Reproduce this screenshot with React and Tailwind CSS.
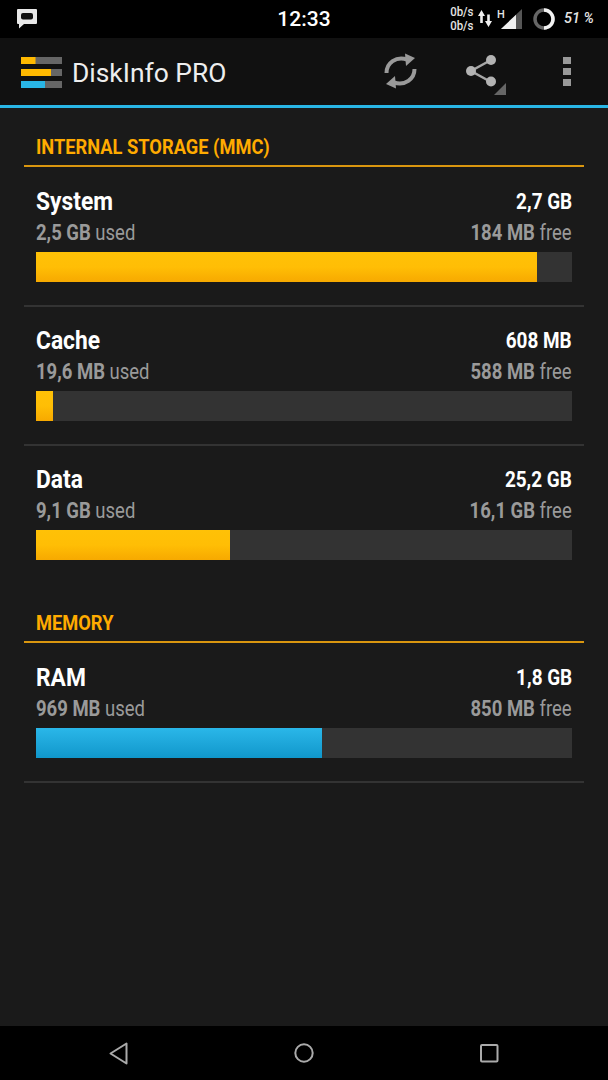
import React from 'react'

const storage = [
  { name: 'System', total: '2,7 GB', used: '2,5 GB', free: '184 MB', width: 'w-[501px]' },
  { name: 'Cache', total: '608 MB', used: '19,6 MB', free: '588 MB', width: 'w-[17px]' },
  { name: 'Data', total: '25,2 GB', used: '9,1 GB', free: '16,1 GB', width: 'w-[194px]' },
]

function Logo() {
  return (
    <svg width="42" height="32" viewBox="0 0 42 32" className="shrink-0">
      <rect x="0" y="0" width="41" height="7" fill="#666" />
      <rect x="0" y="0" width="14.5" height="7" fill="#ffb900" />
      <rect x="0" y="12" width="41" height="7" fill="#666" />
      <rect x="0" y="12" width="30" height="7" fill="#ffb900" />
      <rect x="0" y="24" width="41" height="7" fill="#666" />
      <rect x="0" y="24" width="24" height="7" fill="#29b6e6" />
    </svg>
  )
}

function SyncIcon() {
  return (
    <svg width="34" height="37" viewBox="0 0 34 37">
      <path d="M2.5 20 C2.5 10 12 3 23 6.5" fill="none" stroke="#9a9a9a" strokeWidth="4" />
      <path d="M30.5 16 C30.5 26 21 33 10 29.5" fill="none" stroke="#9a9a9a" strokeWidth="4" />
      <path d="M21 0.5 L31 5 L22 13 Z" fill="#9a9a9a" />
      <path d="M12 35.5 L2 31 L11 23 Z" fill="#9a9a9a" />
    </svg>
  )
}

function ShareIcon() {
  return (
    <svg width="42" height="44" viewBox="0 0 42 44">
      <path d="M26 7 L6 18 L26 29" fill="none" stroke="#a6a6a6" strokeWidth="2.5" />
      <circle cx="26" cy="7" r="5" fill="#b3b3b3" />
      <circle cx="6" cy="18" r="5" fill="#b3b3b3" />
      <circle cx="26" cy="28.5" r="5" fill="#b3b3b3" />
      <path d="M41 30 V42 H29 Z" fill="#666" />
    </svg>
  )
}

function StatusBar() {
  return (
    <div className="h-[38px] bg-black grid grid-cols-[1fr_auto_1fr] items-center shrink-0">
      <div className="pl-[17px]">
        <svg width="20" height="20" viewBox="0 0 20 20">
          <path d="M1 0 H19 Q20 0 20 1 V14 Q20 15 19 15 H7 L2 19.5 V15 H1 Q0 15 0 14 V1 Q0 0 1 0 Z" fill="#e8e8e8" />
          <rect x="4" y="4" width="12" height="6.5" rx="2" fill="#111" />
        </svg>
      </div>
      <div className="text-white text-[21px] font-medium pt-[2px]">12:33</div>
      <div className="flex items-center justify-end pr-[13px] text-[#e4e4e4]">
        <div className="flex flex-col text-[13px] leading-[13.5px] font-medium -mt-[1px]">
          <span className="origin-right scale-x-[0.88]">0b/s</span>
          <span className="origin-right scale-x-[0.88]">0b/s</span>
        </div>
        <svg width="14" height="19" viewBox="0 0 14 19" className="ml-[5px] mt-[-1px]">
          <path d="M3.5 1 L7 7 H4.8 V14 H2.2 V7 H0 Z" fill="#f0f0f0" />
          <path d="M10.5 18 L7 12 H9.2 V5.5 H11.8 V12 H14 Z" fill="#f0f0f0" />
        </svg>
        <div className="relative w-[24px] h-[21px] ml-[6px]">
          <svg width="21" height="20" viewBox="0 0 21 20" className="absolute left-[3px] top-0">
            <path d="M21 0 V20 H0 Z" fill="#555" />
            <path d="M15 5.7 V20 H0 Z" fill="#f0f0f0" />
          </svg>
          <span className="absolute -left-[1px] -top-[2px] text-[11px] font-medium">H</span>
        </div>
        <svg width="22" height="22" viewBox="0 0 22 22" className="ml-[11px]">
          <circle cx="11" cy="11" r="9" fill="none" stroke="#666" strokeWidth="3.5" />
          <path d="M11 2 A9 9 0 0 1 11 20" fill="none" stroke="#f2f2f2" strokeWidth="3.5" />
        </svg>
        <span className="ml-[9px] text-[14.5px] italic font-medium w-[31px] whitespace-nowrap">51 %</span>
      </div>
    </div>
  )
}

function AppBar() {
  return (
    <div className="h-[70px] bg-[#111111] border-b-[3px] border-[#29b6e6] flex items-center shrink-0">
      <div className="pl-[21px] pt-[3px]">
        <Logo />
      </div>
      <span className="ml-[9px] mt-[3px] text-[#eeeeee] text-[26.4px] leading-none">DiskInfo PRO</span>
      <div className="ml-auto flex items-center">
        <SyncIcon />
        <div className="ml-[47px] mt-[7px]"><ShareIcon /></div>
        <div className="ml-[56px] mr-[37px] flex flex-col gap-[4px]">
          <span className="w-[8px] h-[7px] bg-[#999999]" />
          <span className="w-[8px] h-[7px] bg-[#999999]" />
          <span className="w-[8px] h-[7px] bg-[#999999]" />
        </div>
      </div>
    </div>
  )
}

function SectionHeader({ title }) {
  return (
    <div className="h-[59px] flex items-end px-[12px] pb-[4px] border-b-[2px] border-[#d9960f]">
      <span className="text-[#ffab00] text-[21px] leading-[28px] font-bold origin-left scale-x-[0.87] whitespace-nowrap">{title}</span>
    </div>
  )
}

function Row({ item, blue, divider }) {
  return (
    <div className={`h-[140px] -mb-[1px] px-[12px] pt-[17px] ${divider ? 'border-b-[2px] border-[#333333]' : ''}`}>
      <div className="flex justify-between items-center h-[34px]">
        <span className="text-white text-[26.5px] font-bold origin-left scale-x-[0.86]">{item.name}</span>
        <span className="text-white text-[22px] font-bold origin-right scale-x-[0.86]">{item.total}</span>
      </div>
      <div className="flex justify-between items-center h-[30px] text-[#9a9a9a] text-[21.5px]">
        <span className="origin-left scale-x-[0.86] whitespace-nowrap"><b>{item.used}</b> used</span>
        <span className="origin-right scale-x-[0.86] whitespace-nowrap"><b>{item.free}</b> free</span>
      </div>
      <div className="h-[30px] bg-[#333333] mt-[4px]">
        <div className={`h-full ${item.width} bg-gradient-to-b ${blue ? 'from-[#2ab7e9] to-[#0f97cb]' : 'from-[#ffc107] via-[#ffbe05] to-[#f7a900]'}`} />
      </div>
    </div>
  )
}

function NavBar() {
  return (
    <div className="h-[54px] bg-black flex items-center justify-between pl-[109px] pr-[109px] shrink-0">
      <svg width="19" height="23" viewBox="0 0 19 23">
        <path d="M17.5 1.5 V21.5 L1.5 11.5 Z" fill="none" stroke="#aaa" strokeWidth="2" strokeLinejoin="round" />
      </svg>
      <svg width="20" height="20" viewBox="0 0 20 20">
        <circle cx="10" cy="10" r="8.7" fill="none" stroke="#aaa" strokeWidth="2" />
      </svg>
      <svg width="19" height="19" viewBox="0 0 19 19">
        <rect x="1" y="1" width="16.5" height="16.5" rx="1" fill="none" stroke="#aaa" strokeWidth="2" />
      </svg>
    </div>
  )
}

export default function App() {
  return (
    <div className="w-[608px] h-[1080px] flex flex-col bg-[#1a1a1a] font-['Roboto',sans-serif] overflow-hidden">
      <StatusBar />
      <AppBar />
      <div className="flex-1 px-[24px]">
        <SectionHeader title="INTERNAL STORAGE (MMC)" />
        {storage.map((item, i) => (
          <Row key={item.name} item={item} divider={i < 2} />
        ))}
        <SectionHeader title="MEMORY" />
        <Row item={{ name: 'RAM', total: '1,8 GB', used: '969 MB', free: '850 MB', width: 'w-[286px]' }} blue divider />
      </div>
      <NavBar />
    </div>
  )
}
